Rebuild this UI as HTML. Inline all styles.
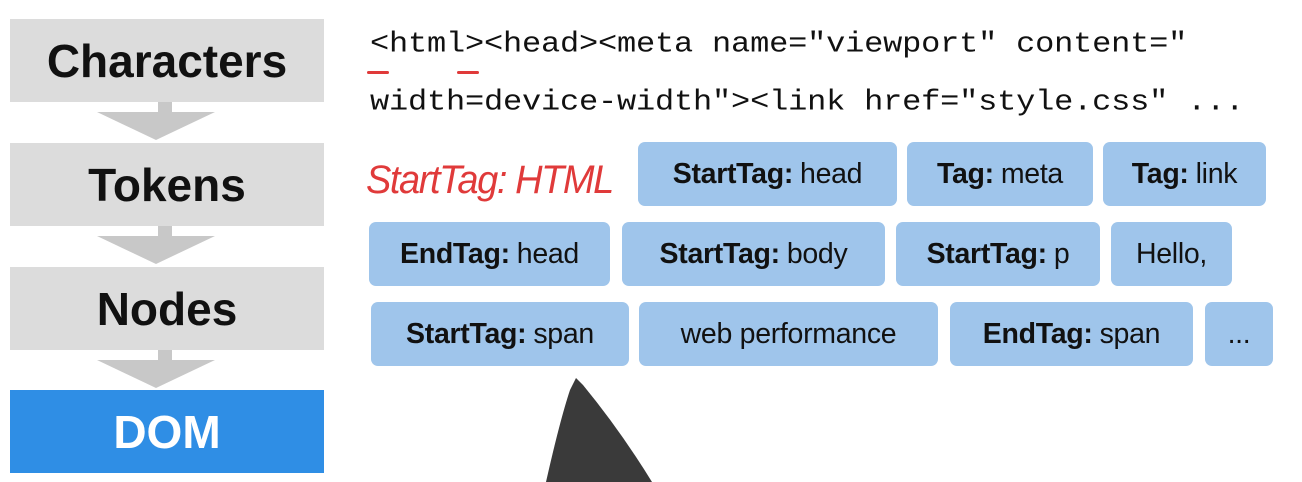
<!DOCTYPE html>
<html><head><style>
body{margin:0;width:1302px;height:482px;background:#fff;position:relative;overflow:hidden;font-family:"Liberation Sans",Arial,sans-serif}
.b{position:absolute;left:10px;width:314px;height:83px;background:#dcdcdc;display:flex;align-items:center;justify-content:center;font-weight:bold;font-size:46px;color:#111}
.ar{position:absolute;left:97px;width:0;height:0;border-left:59px solid transparent;border-right:59px solid transparent;border-top:28px solid #c8c8c8}
.st{position:absolute;left:158px;width:14px;height:12px;background:#c8c8c8}
.code{position:absolute;left:370px;font-family:"Liberation Mono",monospace;font-size:32px;color:#111;white-space:pre;letter-spacing:-0.2px;transform:scaleY(0.9);transform-origin:top left}
.t{position:absolute;height:64px;background:#9fc5eb;border-radius:7px;display:flex;align-items:center;justify-content:center;font-size:28.5px;color:#111;letter-spacing:-0.3px}
.t b{margin-right:7px}
</style></head><body>
<div class="b" style="top:19px">Characters</div>
<div class="st" style="top:102px"></div><div class="ar" style="top:112px"></div>
<div class="b" style="top:143px">Tokens</div>
<div class="st" style="top:226px"></div><div class="ar" style="top:236px"></div>
<div class="b" style="top:267px">Nodes</div>
<div class="st" style="top:350px"></div><div class="ar" style="top:360px"></div>
<div class="b" style="top:390px;background:#2f8ee5;color:#fff">DOM</div>

<div class="code" style="top:27px">&lt;html&gt;&lt;head&gt;&lt;meta name="viewport" content="</div>
<div class="code" style="top:85px">width=device-width"&gt;&lt;link href="style.css" ...</div>
<div style="position:absolute;left:367px;top:71px;width:22px;height:3px;background:#e03a3a;border-radius:2px"></div>
<div style="position:absolute;left:457px;top:71px;width:22px;height:3px;background:#e03a3a;border-radius:2px"></div>
<div style="position:absolute;left:366px;top:158px;font-family:'Liberation Sans',sans-serif;font-style:italic;font-size:40px;color:#e03a3a;letter-spacing:-1.5px;transform:scaleX(0.95);transform-origin:left">StartTag: HTML</div>

<div class="t" style="left:638px;top:142px;width:259px"><b>StartTag:</b>head</div>
<div class="t" style="left:907px;top:142px;width:186px"><b>Tag:</b>meta</div>
<div class="t" style="left:1103px;top:142px;width:163px"><b>Tag:</b>link</div>

<div class="t" style="left:369px;top:222px;width:241px"><b>EndTag:</b>head</div>
<div class="t" style="left:622px;top:222px;width:263px"><b>StartTag:</b>body</div>
<div class="t" style="left:896px;top:222px;width:204px"><b>StartTag:</b>p</div>
<div class="t" style="left:1111px;top:222px;width:121px">Hello,</div>

<div class="t" style="left:371px;top:302px;width:258px"><b>StartTag:</b>span</div>
<div class="t" style="left:639px;top:302px;width:299px">web performance</div>
<div class="t" style="left:950px;top:302px;width:243px"><b>EndTag:</b>span</div>
<div class="t" style="left:1205px;top:302px;width:68px">...</div>

<svg style="position:absolute;left:0;top:0" width="1302" height="482">
<path d="M576 378 L583 385 Q620 430 652 482 L546 482 Q560 420 570 390 Z" fill="#3a3a3a"/>
</svg>
</body></html>
